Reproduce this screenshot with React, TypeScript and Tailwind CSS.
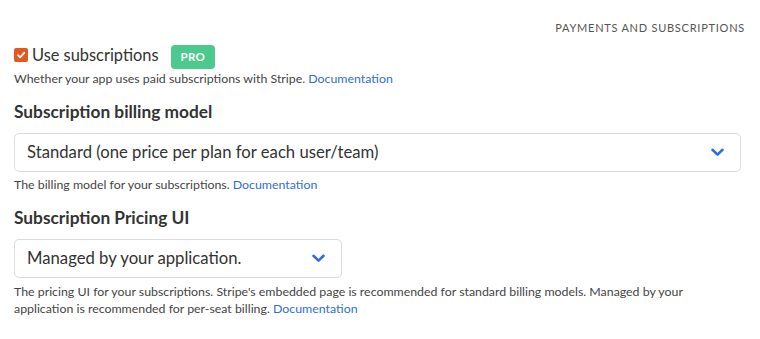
import { ReactNode } from 'react';

function Chevron() {
  return (
    <svg width="13" height="9" viewBox="0 0 13 9" fill="none" className="shrink-0">
      <path d="M1.5 1.8 L6.5 6.6 L11.5 1.8" stroke="#2f6fd1" strokeWidth="2.6" strokeLinecap="round" strokeLinejoin="round" />
    </svg>
  );
}

function Select({ value, className }: { value: string; className: string }) {
  return (
    <div
      className={`h-[39px] flex items-center justify-between pl-[12px] pr-[16px] border border-[#dcdcdc] rounded-[5px] bg-white text-[16.7px] text-[#333] ${className}`}
    >
      <span>{value}</span>
      <Chevron />
    </div>
  );
}

function Help({ children, className = '' }: { children: ReactNode; className?: string }) {
  return <p className={`text-[12.35px] text-[#444] ${className}`}>{children}</p>;
}

function DocLink() {
  return <a className="text-[#2f6fd1]">Documentation</a>;
}

export default function App() {
  return (
    <div className="w-[760px] h-[339px] bg-white pl-[14px] pr-[19px] pt-[20px] font-['Lato',sans-serif] text-[#333]">
      <div className="flex justify-end -mr-[4px] text-[11px] leading-[16px] tracking-[0.75px] text-[#555]">
        PAYMENTS AND SUBSCRIPTIONS
      </div>

      <div className="mt-[7px] h-[24px] flex items-center">
        <span className="w-[14px] h-[14px] rounded-[2px] bg-[#e05a1f] flex items-center justify-center">
          <svg width="10" height="10" viewBox="0 0 10 10" fill="none">
            <path d="M2 5.2 L4.2 7.3 L8.2 2.8" stroke="white" strokeWidth="1.8" strokeLinecap="round" strokeLinejoin="round" />
          </svg>
        </span>
        <label className="ml-[4px] text-[16.4px] leading-[24px] text-[#333]">Use subscriptions</label>
        <span className="ml-[12px] mt-[4px] h-[24px] px-[10px] flex items-center rounded-[4px] bg-[#4cc98c] text-white text-[11.5px] font-bold tracking-[0.3px]">
          PRO
        </span>
      </div>
      <Help className="mt-[3px] leading-[18px]">
        Whether your app uses paid subscriptions with Stripe. <DocLink />
      </Help>

      <h3 className="mt-[12px] text-[17.3px] leading-[24px] font-bold text-[#333]">Subscription billing model</h3>
      <Select value="Standard (one price per plan for each user/team)" className="mt-[9px] w-full" />
      <Help className="mt-[4px] leading-[18px]">
        The billing model for your subscriptions. <DocLink />
      </Help>

      <h3 className="mt-[12px] text-[17.3px] leading-[24px] font-bold text-[#333]">Subscription Pricing UI</h3>
      <Select value="Managed by your application." className="mt-[9px] w-[328px]" />
      <Help className="mt-[5px] leading-[17px]">
        The pricing UI for your subscriptions. Stripe's embedded page is recommended for standard billing models. Managed by your
        <br />
        application is recommended for per-seat billing. <DocLink />
      </Help>
    </div>
  );
}
